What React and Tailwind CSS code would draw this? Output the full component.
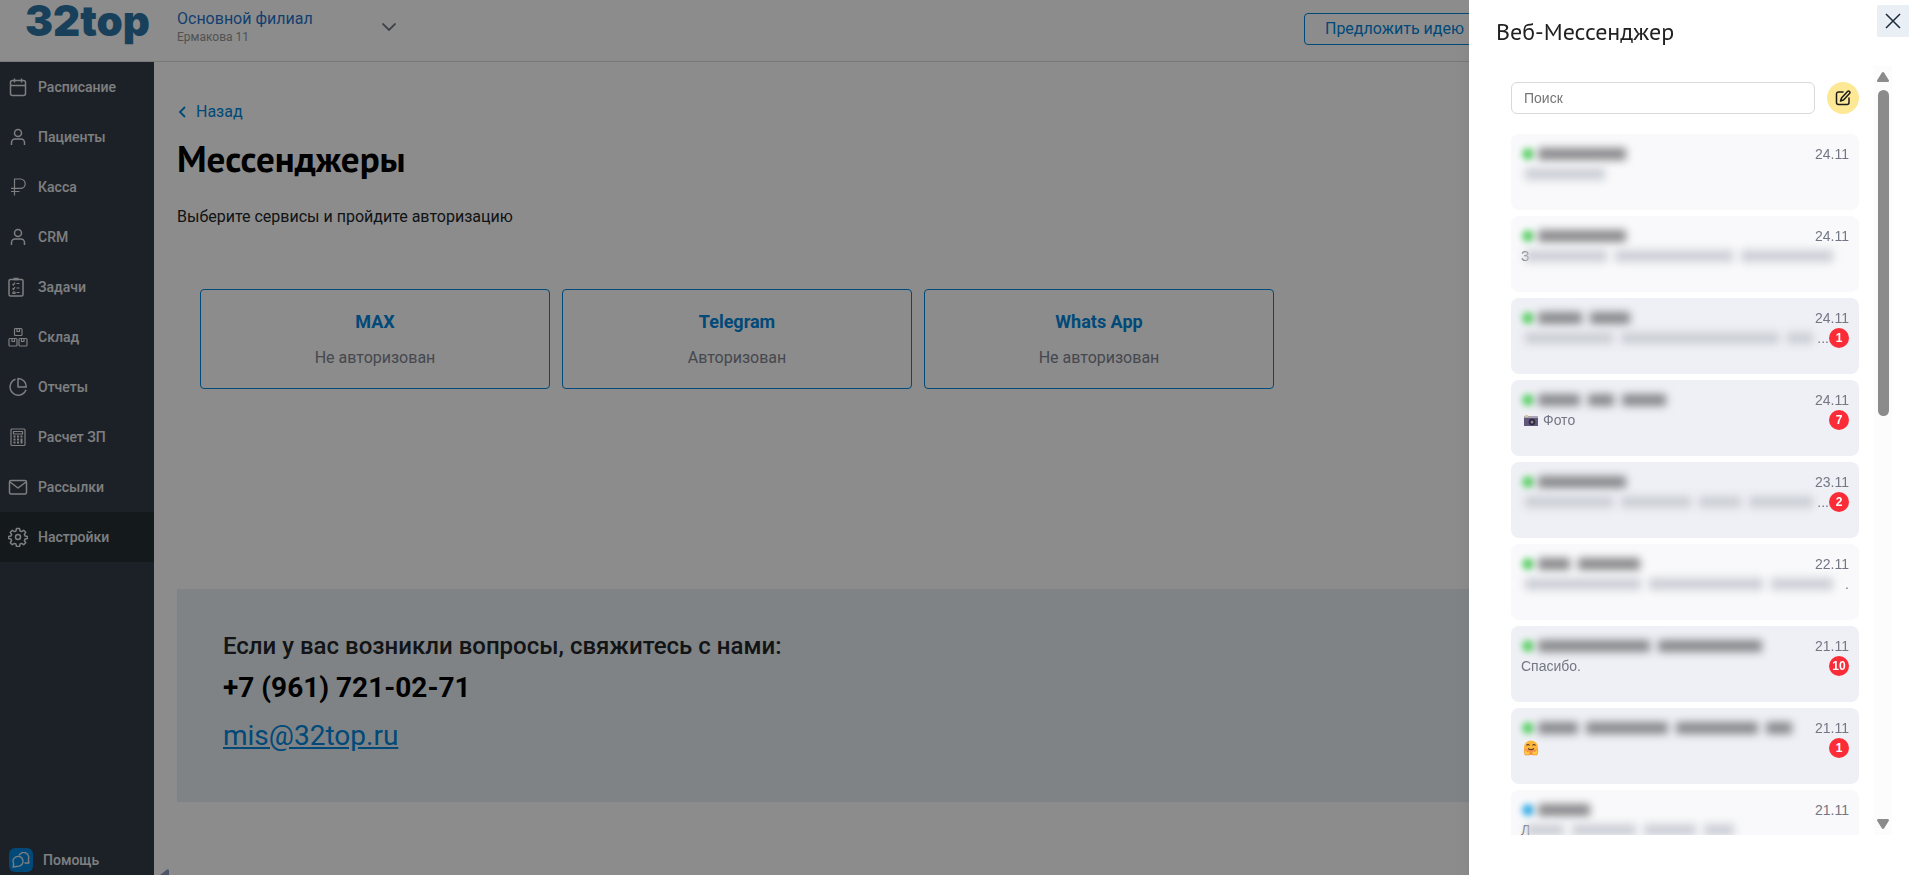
import React, { useState } from "react";

const menu = [
  { name: "Расписание", icon: "calendar" },
  { name: "Пациенты", icon: "user" },
  { name: "Касса", icon: "ruble" },
  { name: "CRM", icon: "user" },
  { name: "Задачи", icon: "tasks" },
  { name: "Склад", icon: "boxes" },
  { name: "Отчеты", icon: "pie" },
  { name: "Расчет ЗП", icon: "calc" },
  { name: "Рассылки", icon: "mail" },
  { name: "Настройки", icon: "gear", active: true },
];

const services = [
  { name: "MAX", status: "Не авторизован" },
  { name: "Telegram", status: "Авторизован" },
  { name: "Whats App", status: "Не авторизован" },
];

// name and words hold the widths of the hidden words
const chats = [
  { date: "24.11", name: [88], words: [80] },
  { date: "24.11", name: [88], first: "З", words: [82, 118, 92] },
  { date: "24.11", name: [44, 40], words: [88, 158, 26], dots: true, unread: 1 },
  { date: "24.11", name: [42, 26, 44], photo: true, unread: 7 },
  { date: "23.11", name: [88], words: [88, 70, 42, 64], dots: true, unread: 2 },
  { date: "22.11", name: [32, 62], words: [116, 114, 62], period: true },
  { date: "21.11", name: [112, 104], text: "Спасибо.", unread: 10 },
  { date: "21.11", name: [40, 82, 82, 26], smile: true, unread: 1 },
  { date: "21.11", name: [52], telegram: true, first: "Л", words: [38, 64, 52, 30] },
];

const icons = {
  calendar: (
    <>
      <rect x="2.5" y="3.5" width="15" height="15" rx="2" />
      <path d="M2.5 8.5h15M6.5 1.5v4M13.5 1.5v4" />
    </>
  ),
  user: (
    <>
      <circle cx="10" cy="6" r="3.5" />
      <path d="M3.5 18v-2.500a3.500 3.500 0 0 1 3.500-3.500h6a3.500 3.500 0 0 1 3.500 3.500V18" />
    </>
  ),
  ruble: <path strokeWidth="1.2" d="M6.500 18.500v-16.500h6a4.700 4.700 0 0 1 0 9.400h-9.500M3 14.500h8.500" />,
  tasks: (
    <g transform="translate(-2 0)">
      <rect x="3" y="2.500" width="14" height="16.500" rx="1.500" />
      <path d="M7.500 2h5" strokeWidth="2.500" />
      <path d="M6.500 7l1 1 1.500-2.500M10.500 6.500h3M6.500 11.500l1 1 1.500-2.500M10.500 11h3M7 15h2v1.500h-2zM10.500 15.500h3" strokeWidth="1.200" />
    </g>
  ),
  boxes: (
    <g strokeWidth="1.200">
      <rect x="6.500" y="1.500" width="7.500" height="7" rx="1" />
      <rect x="1" y="11.500" width="8" height="7.500" rx="1" />
      <rect x="11" y="11.500" width="8" height="7.500" rx="1" />
      <path d="M9 2v2.500h2.500V2M4 12v2.500h2.500V12M13.500 12v2.500H16V12" />
    </g>
  ),
  pie: (
    <>
      <path d="M7.500 2.200a8.200 8.200 0 1 0 10.500 10.500" />
      <path d="M10 1.500a8.300 8.300 0 0 1 8.300 8.500H10z" />
    </>
  ),
  calc: (
    <g strokeWidth="1.200">
      <rect x="3" y="2" width="14" height="16.500" rx="1" />
      <rect x="5.500" y="4.500" width="9" height="2.500" />
      <path d="M6.500 8.500v8M10 8.500v8" strokeWidth="2" strokeDasharray="2 1" />
      <path d="M13.500 8.500v2M13.500 11.500v5" strokeWidth="2" />
    </g>
  ),
  mail: (
    <>
      <rect x="1.500" y="3.500" width="17" height="13.500" rx="1.500" />
      <path d="M2 5l8 6 8-6" />
    </>
  ),
  gear: (
    <>
      <circle cx="10" cy="10" r="2.500" />
      <path d="M8.500 1.500h3l.6 2.500 1.400.6 2.200-1.300 2 2-1.300 2.200.6 1.400 2.500.6v2l-2.500.6-.6 1.400 1.300 2.200-2 2-2.200-1.300-1.400.6-.6 2.500h-3l-.6-2.500-1.400-.6-2.200 1.300-2-2 1.300-2.200-.6-1.400-2.500-.6v-2l2.500-.6.6-1.400-1.300-2.200 2-2 2.200 1.300 1.400-.6z" />
    </>
  ),
};

const MenuIcon = ({ name }) => (
  <svg viewBox="0 0 20 20" className="w-5 h-5 shrink-0" fill="none" stroke="currentColor" strokeWidth="1.5" strokeLinejoin="round">
    {icons[name]}
  </svg>
);

const HiddenWords = ({ widths, className }) => (
  <span aria-hidden="true" className="flex gap-2 py-1 pl-1">
    {widths.map((w, i) => (
      <span key={i} className={className} style={{ width: w }}></span>
    ))}
  </span>
);

const Camera = () => (
  <svg viewBox="0 0 16 14" className="w-4 h-4" role="img" aria-label="Камера">
    <path d="M1 4h14v9H1z" fill="#62587c" />
    <path d="M1 3h14v2H1z" fill="#a9a6b5" />
    <path d="M2 2h3v2H2z" fill="#e9c877" />
    <circle cx="9" cy="9" r="3.300" fill="#2d2938" />
    <circle cx="9" cy="9" r="1.500" fill="#8a83a3" />
  </svg>
);

const Smile = () => (
  <svg viewBox="0 0 16 16" className="w-4 h-4" role="img" aria-label="Обнимаю">
    <circle cx="8" cy="7.500" r="7" fill="#fdb83c" />
    <path d="M1 8a7 7 0 0 0 14 0c-2 3-12 3-14 0z" fill="#f98f4b" />
    <path d="M3.500 5.500q1.500-2 3 0M9.500 5.500q1.500-2 3 0M5 8.500q3 2.500 6 0" fill="none" stroke="#5b3429" strokeWidth="1.100" />
    <path d="M1 10.500l1 4.500h4.500l.5-3-1.500-1-1 1-2-2.500zM15 10.500L14 15H9.500L9 12l1.500-1 1 1 2-2.500z" fill="#ffc83d" stroke="#ef8a35" strokeWidth=".6" />
  </svg>
);

const ChatItem = ({ chat }) => (
  <li>
    <button
      type="button"
      className={`flex flex-col w-full h-[76px] p-[10px] rounded-lg text-left text-sm leading-5 text-[#737784] ${
        chat.unread ? "bg-[#eff0f5]" : "bg-[#f9f9fb]"
      }`}
    >
      <span className="flex w-full h-5 items-center">
        <span
          aria-hidden="true"
          className={`w-3 h-3 ml-px rounded-full blur-[3px] shrink-0 ${chat.telegram ? "bg-[#38aee6]" : "bg-[#5fd06b]"}`}
        ></span>
        <HiddenWords widths={chat.name} className="h-3 bg-[#88888c] blur-[4px]" />
        <span className="ml-auto">{chat.date}</span>
      </span>
      <span className="flex w-full h-5 items-center">
        {chat.first && <span className="-mr-2">{chat.first}</span>}
        {chat.words && <HiddenWords widths={chat.words} className="h-3 bg-[#cccfd6] blur-[4px]" />}
        {chat.period && <span className="ml-auto">.</span>}
        {chat.photo && (
          <span className="flex items-center gap-1 pl-0.5">
            <Camera /> Фото
          </span>
        )}
        {chat.smile && (
          <span className="pl-0.5">
            <Smile />
          </span>
        )}
        {chat.text}
        {chat.unread && (
          <span className="flex ml-auto">
            {chat.dots && <span>...</span>}
            <span className="w-5 h-5 rounded-full bg-[#fa2c37] text-white text-xs leading-5 font-bold text-center">
              {chat.unread}
            </span>
          </span>
        )}
      </span>
    </button>
  </li>
);

const Messenger = ({ onClose }) => {
  const [search, setSearch] = useState("");

  return (
    <aside className="fixed inset-y-0 right-0 w-[440px] flex flex-col bg-white pb-10 shadow-xl">
      <div className="flex justify-between h-[66px] shrink-0 pl-[27px]">
        <h2 className="pt-4 font-['PT_Sans','Noto_Sans',sans-serif] text-2xl leading-8 text-[#212121]">Веб-Мессенджер</h2>
        <button
          type="button"
          aria-label="Закрыть"
          onClick={onClose}
          className="w-8 h-8 mt-[5px] flex items-center justify-center bg-[#e9eff4] rounded-l-xs"
        >
          <svg viewBox="0 0 16 16" className="w-4 h-4" stroke="#1c2b3d" strokeWidth="1.5">
            <path d="M1 1l14 14M15 1L1 15" />
          </svg>
        </button>
      </div>
      <div className="flex flex-1 min-h-0 pl-[27px] pr-[17px]">
        <div className="flex-1 overflow-hidden px-[15px] pt-4 font-['Liberation_Sans',Arial,sans-serif]">
          <div className="flex gap-3 mb-5">
            <input
              type="text"
              aria-label="Поиск"
              placeholder="Поиск"
              value={search}
              onChange={(e) => setSearch(e.target.value)}
              className="flex-1 min-w-0 h-8 px-3 border border-[#d9d9d9] rounded-md text-sm placeholder:text-[#757575] focus:outline-none"
            />
            <button
              type="button"
              aria-label="Новое сообщение"
              className="w-8 h-8 rounded-full bg-[#fde895] flex items-center justify-center"
            >
              <svg viewBox="0 0 16 16" className="w-4 h-4" fill="none" stroke="#1c1c1c" strokeWidth="1.5" strokeLinejoin="round" strokeLinecap="round">
                <path d="M8 2H3.500a2 2 0 0 0-2 2v8.500a2 2 0 0 0 2 2H12a2 2 0 0 0 2-2V8" />
                <path d="M12.500 1.500a1.400 1.400 0 0 1 2 2L8.500 10l-3 1 1-3z" />
              </svg>
            </button>
          </div>
          <ul className="flex flex-col gap-[6px]">
            {chats.map((chat, i) => (
              <ChatItem key={i} chat={chat} />
            ))}
          </ul>
        </div>
        <div aria-hidden="true" className="w-[18px] flex flex-col items-center bg-[#fcfcfc] py-[6px]">
          <svg viewBox="0 0 12 10" className="w-3 h-[10px]" fill="#8b8b8b">
            <path d="M6 0q.8 0 1.200.8L12 8.500q0 1.500-1 1.500H1Q0 10 0 8.500L4.800.8Q5.200 0 6 0z" />
          </svg>
          <div className="w-[11px] h-[326px] mt-2 rounded-full bg-[#8b8b8b]"></div>
          <svg viewBox="0 0 12 10" className="w-3 h-[10px] mt-auto" fill="#8b8b8b">
            <path d="M6 10q.8 0 1.200-.8L12 1.500Q12 0 11 0H1Q0 0 0 1.500L4.800 9.200Q5.200 10 6 10z" />
          </svg>
        </div>
      </div>
    </aside>
  );
};

const App = () => {
  const [open, setOpen] = useState(true);

  return (
    <div className="min-h-screen flex flex-col bg-white font-[Roboto,sans-serif] text-base text-[#212529]">
      <header className="flex h-[62px] border-b border-[#dcdcdc]">
        <a href="#" className="w-[154px] pl-[25px] font-['Arial_Black',Inter,sans-serif] font-black text-[42px] leading-[42px] text-[#2f76a6]">
          32top
        </a>
        <button type="button" className="flex items-center w-[242px] pl-[23px] pb-[7px] text-left">
          <span className="flex-1">
            <span className="block leading-5 text-[#1f74cc]">Основной филиал</span>
            <span className="block text-xs leading-4 text-[#969696]">Ермакова 11</span>
          </span>
          <svg viewBox="0 0 14 8" className="w-[14px] h-2" fill="none" stroke="#6f7683" strokeWidth="1.800">
            <path d="M.5.5L7 7l6.500-6.500" />
          </svg>
        </button>
        <button
          type="button"
          className="h-8 mt-[13px] ml-auto mr-[424px] px-5 border border-[#0086dc] rounded text-[#0086dc] whitespace-nowrap"
        >
          Предложить идею
        </button>
      </header>

      <div className="flex flex-1">
        <nav className="relative w-[154px] shrink-0 flex flex-col bg-[#343b47] text-sm font-medium text-[#e4e7ea]">
          {menu.map((item) => (
            <a
              key={item.name}
              href="#"
              className={`flex items-center gap-[10px] h-[50px] pl-2 ${item.active ? "bg-[#252e33]" : ""}`}
            >
              <MenuIcon name={item.icon} />
              {item.name}
            </a>
          ))}
          <a href="#" className="flex items-center gap-[10px] h-[30px] mt-auto pl-[9px]">
            <span className="w-6 h-6 rounded-md bg-[#0086dc] flex items-center justify-center">
              <svg viewBox="0 0 18 16" className="w-[18px] h-4" fill="none" stroke="currentColor" strokeWidth="1.300" strokeLinejoin="round">
                <path d="M1 15l.8-3A5 5 0 1 1 7 14.200z" />
                <path d="M7 3.500a5 5 0 0 1 9.300 4l.7 3.500h-4.500" />
              </svg>
            </span>
            Помощь
          </a>
          <svg viewBox="0 0 9 6" className="absolute bottom-0 left-[160px] w-[9px] h-[6px]" fill="#8e9cc4">
            <path d="M0 6L7 .5Q9-.5 9 2v4z" />
          </svg>
        </nav>

        <main className="flex-1 min-w-0 px-[23px] pt-[38px]">
          <a href="#" className="inline-flex items-center gap-2 leading-6 text-[#0086dc]">
            <svg viewBox="0 0 8 12" className="w-[11px] h-3" fill="none" stroke="currentColor" strokeWidth="1.800">
              <path d="M6.500 1L1.500 6l5 5" />
            </svg>
            Назад
          </a>
          <h1 className="mt-[10px] font-['PT_Sans','Noto_Sans',sans-serif] text-[37px] leading-[46px] font-semibold text-black">Мессенджеры</h1>
          <p className="mt-6 leading-6">Выберите сервисы и пройдите авторизацию</p>

          <div className="flex flex-wrap gap-3 px-[23px] mt-[60px]">
            {services.map((service) => (
              <a
                key={service.name}
                href="#"
                className="w-[350px] h-[100px] border border-[#0086dc] rounded flex flex-col items-center pt-5 text-center"
              >
                <span className="text-lg leading-6 font-bold text-[#0086dc]">{service.name}</span>
                <span className="mt-3 leading-6 text-[#7f8390]">{service.status}</span>
              </a>
            ))}
          </div>

          <section className="h-[213px] mt-[200px] px-[46px] pt-[41px] bg-[#e7eef2]">
            <p className="text-2xl leading-8 font-medium">Если у вас возникли вопросы, свяжитесь с нами:</p>
            <p className="mt-2 text-[28px] leading-9 font-bold text-black">+7 (961) 721-02-71</p>
            <a href="mailto:mis@32top.ru" className="inline-block mt-3 text-[28px] leading-9 text-[#0086dc] underline">
              mis@32top.ru
            </a>
          </section>
        </main>
      </div>

      {open && (
        <>
          <div className="fixed inset-0 bg-black/45" onClick={() => setOpen(false)}></div>
          <Messenger onClose={() => setOpen(false)} />
        </>
      )}
    </div>
  );
};

export default App;
